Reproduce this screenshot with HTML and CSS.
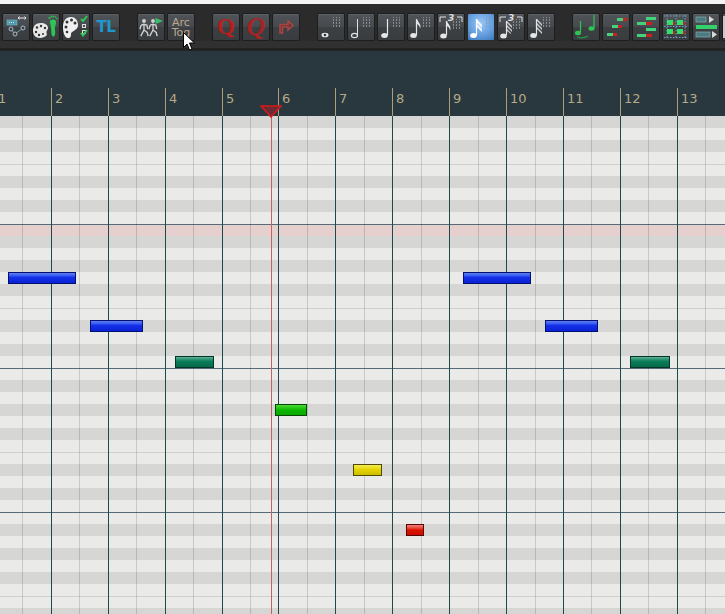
FILE: index.html
```html
<!DOCTYPE html>
<html lang="en">
<head>
<meta charset="utf-8">
<title>Piano roll</title>
<link rel="stylesheet" href="styles.css">
</head>
<body>
<svg class="defs" width="0" height="0" aria-hidden="true">
  <defs>
    <pattern id="dots" x="1" width="3" height="3" patternUnits="userSpaceOnUse"><rect width="1" height="2" fill="#86898d"/></pattern>
    <symbol id="dotgrid" viewBox="0 0 28 28"><rect x="16" y="4" width="9" height="11" fill="url(#dots)"/></symbol>
    <symbol id="walker" viewBox="0 0 12 22">
      <circle cx="6" cy="2.500" r="2.400" fill="#cfcfcf"/>
      <path d="M6 5.500v8M2.500 7.500l3.500-1 3.500 1 1 5M2.500 7.500l-1.500 5M6 13.500l-4 7.500M6 13.500l4 3 1 4.500" fill="none" stroke="#cfcfcf" stroke-width="1.700"/>
    </symbol>
  </defs>
</svg>

<div class="topline"></div>

<header class="toolbar">
  <div class="group">
    <button class="tb"><svg viewBox="0 0 28 28"><rect x="5" y="7" width="10" height="5" fill="#4f98ac" stroke="#6fc0cc" stroke-width=".6"/><path d="M7 9.500h6" stroke="#d8eef2" stroke-dasharray="1 1"/><path d="M16 5h8M16 5l1.500-1.500M16 5l1.500 1.500M24 5l-1.500-1.500M24 5l-1.500 1.500" stroke="#e8e8e8" fill="none"/><path d="M9 16l4 5 8-6" stroke="#7d9ab0" fill="none"/><circle cx="9" cy="16" r="2" fill="#3b3e41" stroke="#a6bccc"/><circle cx="13" cy="21" r="2" fill="#3b3e41" stroke="#a6bccc"/><circle cx="21" cy="15" r="2" fill="#3b3e41" stroke="#a6bccc"/></svg></button>
    <button class="tb"><svg viewBox="0 0 28 28"><path d="M8.500 10C4 10 1 13 1 17.500 1 22 3.500 25 8 25c2.500 0 5-1 6.500-2.500 1-1-.5-2.500 0-4 .5-1.500 1.500-2 1.500-3.500C16 12 13 10 8.500 10z" fill="#e8e8e8"/><g fill="#333"><circle cx="5" cy="14.500" r="1.200"/><circle cx="9" cy="13" r="1.200"/><circle cx="13" cy="15" r="1.200"/><circle cx="4" cy="19" r="1.200"/><circle cx="7" cy="22" r="1.200"/><circle cx="11" cy="21" r="1"/></g><path d="M18 9c-.5-1.500 1-2.500 3-2.500s3.500 1 3 3.500c-.5 3-1.500 4.500-1 7 .5 3 0 6.500-1.500 6.500-2 0-2-2.500-2.200-5.500-.1-3-.8-6-1.300-9z" fill="#2dc653"/><g fill="#2dc653"><circle cx="17.500" cy="5" r="1.100"/><circle cx="19.500" cy="3.500" r=".9"/><circle cx="21.500" cy="3.500" r=".9"/><circle cx="23.500" cy="4" r=".8"/><circle cx="25" cy="5.500" r=".8"/></g></svg></button>
    <button class="tb"><svg viewBox="0 0 28 28"><path d="M9 4C4 4 1 8 1 14c0 6 2 11 5 11 3 0 3-2 3-4 0-2 3-3 4-4 1.500-1 3-2 3-5 0-5-3-8-7-8z" fill="#f0f0f0"/><g fill="#333"><circle cx="5" cy="9" r="1.500"/><circle cx="9.500" cy="7" r="1.500"/><circle cx="13" cy="10" r="1.500"/><circle cx="4" cy="14" r="1.500"/><circle cx="5" cy="19" r="1.300"/></g><path d="M19 6l2 2 4-5" stroke="#2dc653" stroke-width="2" fill="none"/><rect x="20.500" y="11.500" width="3" height="3" fill="none" stroke="#e0e0e0"/><rect x="20.500" y="17.500" width="3" height="3" fill="none" stroke="#e0e0e0"/><path d="M19 20l2 2.500 4-5.500" stroke="#2dc653" stroke-width="2" fill="none"/></svg></button>
    <button class="tb tb-tl">TL</button>
  </div>
  <div class="group">
    <button class="tb"><svg viewBox="0 0 28 28"><use href="#walker" x="2" y="6" width="10" height="18"/><use href="#walker" x="11" y="6" width="10" height="18"/><path d="M18.500 5l7.500 3-7.500 3z" fill="#35c46b"/></svg></button>
    <button class="tb tb-text">Arc<br>Tog</button>
  </div>
  <div class="group">
    <button class="tb tb-q">Q</button>
    <button class="tb tb-q tb-qi">Q</button>
    <button class="tb"><svg viewBox="0 0 28 28"><path d="M8 20v-8.500h8V8l5 4.500-5 4.500v-3h-5.500v6z" fill="#6e3537" stroke="#a84545" stroke-width="1.500"/></svg></button>
  </div>
  <div class="group">
    <button class="tb"><svg viewBox="0 0 28 28"><use href="#dotgrid"/><ellipse cx="8" cy="22" rx="3.500" ry="2.300" fill="#e8e8e8"/><ellipse cx="8" cy="22" rx="1.300" ry="1.200" fill="#333"/></svg></button>
    <button class="tb"><svg viewBox="0 0 28 28"><use href="#dotgrid"/><path d="M10.500 6v16" stroke="#e0e0e0"/><ellipse cx="7.500" cy="22.500" rx="3" ry="2.200" fill="none" stroke="#e0e0e0" stroke-width="1.200"/></svg></button>
    <button class="tb"><svg viewBox="0 0 28 28"><use href="#dotgrid"/><path d="M10.500 6v16" stroke="#e6e6e6" stroke-width="1.200"/><ellipse cx="7.500" cy="22.500" rx="3.300" ry="2.500" fill="#e6e6e6"/></svg></button>
    <button class="tb"><svg viewBox="0 0 28 28"><use href="#dotgrid"/><path d="M9.500 6v16" stroke="#e6e6e6" stroke-width="1.200"/><path d="M10 6c1 4 5 5 3 10 0-3-1.500-4-3-5z" fill="#e6e6e6"/><ellipse cx="6.500" cy="22.500" rx="3.300" ry="2.500" fill="#e6e6e6"/></svg></button>
    <button class="tb"><svg viewBox="0 0 28 28"><path d="M3 9V4h6M20 4h5v5" stroke="#e0e0e0" fill="none"/><text x="11" y="8" class="svg-three">3</text><use href="#dotgrid" y="2"/><path d="M9.500 8v14" stroke="#e6e6e6" stroke-width="1.200"/><path d="M10 8c1 4 5 5 3 10 0-3-1.500-4-3-5z" fill="#e6e6e6"/><ellipse cx="6.500" cy="23" rx="3.300" ry="2.500" fill="#e6e6e6"/></svg></button>
    <button class="tb tb-on"><svg viewBox="0 0 28 28"><rect x="18" y="4" width="7" height="11" fill="url(#dots)" opacity=".6"/><path d="M9.500 6v16" stroke="#fff" stroke-width="1.200"/><path d="M10 6l5 6v3l-5-5zM10 11l5 5v3l-5-5z" fill="#f0f6ff"/><ellipse cx="6.500" cy="22.500" rx="3.300" ry="2.500" fill="#fff"/></svg></button>
    <button class="tb"><svg viewBox="0 0 28 28"><path d="M3 9V4h6M20 4h5v5" stroke="#e0e0e0" fill="none"/><text x="11" y="8" class="svg-three">3</text><use href="#dotgrid" y="2"/><path d="M9.500 8v14" stroke="#e6e6e6" stroke-width="1.200"/><path d="M10 8l5 5v2l-5-5zM10 12l5 5v2l-5-5zM10 16l4 4v1l-4-3z" fill="#d0d0d0"/><ellipse cx="6.500" cy="23" rx="3.300" ry="2.500" fill="#e6e6e6"/></svg></button>
    <button class="tb"><svg viewBox="0 0 28 28"><use href="#dotgrid"/><path d="M9.500 6v16" stroke="#e6e6e6" stroke-width="1.200"/><path d="M10 6l5 5v2l-5-5zM10 10l5 5v2l-5-5zM10 14l5 5v2l-5-5z" fill="#d0d0d0"/><ellipse cx="6.500" cy="22.500" rx="3.300" ry="2.500" fill="#e6e6e6"/></svg></button>
  </div>
  <div class="group">
    <button class="tb"><svg viewBox="0 0 28 28"><path d="M8.500 8v11M22 2v13" stroke="#2dc653" fill="none" stroke-width="1.200"/><ellipse cx="6" cy="20" rx="3" ry="2.200" fill="#2dc653"/><ellipse cx="19.500" cy="15.500" rx="3" ry="2.200" fill="#2dc653"/><path d="M5 24c4 1.500 8 1 11-1" stroke="#1f9a45" fill="none" stroke-width="1.200"/></svg></button>
    <button class="tb"><svg viewBox="0 0 28 28"><rect x="15" y="5" width="6" height="3" fill="#43d37a"/><rect x="21" y="5" width="4" height="3" fill="#c92020"/><rect x="10" y="12" width="6" height="3" fill="#43d37a"/><rect x="16" y="12" width="4" height="3" fill="#c92020"/><rect x="5" y="20" width="6" height="3" fill="#43d37a"/><rect x="11" y="20" width="4" height="3" fill="#c92020"/></svg></button>
    <button class="tb"><svg viewBox="0 0 28 28"><rect x="14" y="4" width="10" height="3" fill="#43d37a"/><rect x="5" y="9" width="9" height="3" fill="#43d37a"/><rect x="14" y="9" width="6" height="3" fill="#c92020"/><rect x="14" y="15" width="10" height="3" fill="#43d37a"/><rect x="5" y="21" width="9" height="3" fill="#43d37a"/><rect x="14" y="21" width="6" height="3" fill="#c92020"/></svg></button>
    <button class="tb"><svg viewBox="0 0 28 28"><path d="M2 3h24M2 13.500h24M2 24.500h24M5 2v24M14 2v24M23 2v24" stroke="#6f9fc0" stroke-dasharray="1.500 1.500" fill="none"/><rect x="5" y="7" width="6" height="5" fill="#2fe06b"/><rect x="11" y="9" width="2" height="3" fill="#c92020"/><rect x="15" y="7" width="6" height="5" fill="#2fe06b"/><rect x="21" y="9" width="2" height="3" fill="#c92020"/><rect x="5" y="16" width="6" height="5" fill="#2fe06b"/><rect x="11" y="18" width="2" height="3" fill="#c92020"/><rect x="15" y="16" width="6" height="5" fill="#2fe06b"/><rect x="21" y="18" width="2" height="3" fill="#c92020"/></svg></button>
    <button class="tb"><svg viewBox="0 0 28 28"><rect x="4" y="4" width="10" height="5" fill="#4d7a80" stroke="#7aa5aa" stroke-width=".8"/><path d="M17 3l5 3.500-5 3.500z" fill="#d8d8d8"/><rect x="4" y="12" width="21" height="4" fill="#34d06b"/><rect x="4" y="19" width="14" height="5" fill="#4d7a80" stroke="#7aa5aa" stroke-width=".8"/><path d="M20 18l5 3.500-5 3.500z" fill="#d8d8d8"/></svg></button>
    <button class="tb"><svg viewBox="0 0 28 28"><rect x="0" y="3" width="3" height="22" fill="#c8c8c8"/></svg></button>
  </div>
</header>

<section class="ruler">
  <div class="bar">1</div><div class="bar">2</div><div class="bar">3</div><div class="bar">4</div><div class="bar">5</div><div class="bar">6</div><div class="bar">7</div><div class="bar">8</div><div class="bar">9</div><div class="bar">10</div><div class="bar">11</div><div class="bar">12</div><div class="bar">13</div>
</section>

<main class="roll">
  <div class="beats">
    <div class="beat"></div><div class="beat"></div><div class="beat"></div><div class="beat"></div><div class="beat"></div><div class="beat"></div><div class="beat"></div><div class="beat"></div><div class="beat"></div><div class="beat"></div><div class="beat"></div><div class="beat"></div><div class="beat"></div><div class="beat"></div><div class="beat"></div><div class="beat"></div><div class="beat"></div><div class="beat"></div><div class="beat"></div><div class="beat"></div><div class="beat"></div><div class="beat"></div><div class="beat"></div><div class="beat"></div><div class="beat"></div><div class="beat"></div>
  </div>
  <div class="note blue n1"></div>
  <div class="note blue n2"></div>
  <div class="note teal n3"></div>
  <div class="note green n4"></div>
  <div class="note yellow n5"></div>
  <div class="note red n6"></div>
  <div class="note blue n7"></div>
  <div class="note blue n8"></div>
  <div class="note teal n9"></div>
  <div class="playline"></div>
</main>

<svg class="playhead" viewBox="0 0 22 13"><path d="M1 1h20L11 12z" fill="#6a2c32" stroke="#d81a1a" stroke-width="1.500"/></svg>
<svg class="cursor" viewBox="0 0 12 19"><path d="M.5.500v15l3.500-3.500 2.500 6 2.500-1-2.500-6h5z" fill="#fff" stroke="#000"/></svg>
</body>
</html>
```

FILE: styles.css
```css
* { box-sizing: border-box; }
html, body {
  margin: 0;
  height: 614px;
  overflow: hidden;
  background: #29373f;
}
body {
  position: relative;
  width: 725px;
  display: flex;
  flex-direction: column;
  font-family: "DejaVu Sans", sans-serif;
}
.defs { position: absolute; }
.topline { height: 4px; flex: none; background: #f4f4f4; }

.toolbar {
  flex: none;
  height: 47px;
  display: flex;
  gap: 17px;
  padding: 9px 0 0 2px;
  background: linear-gradient(#2b2b2b 0, #2b2b2b 37px, #303030 37px, #303030 44px, #222 44px);
  overflow: hidden;
}
.group { display: flex; gap: 2px; flex: none; }
.tb {
  flex: none;
  width: 28px;
  height: 28px;
  margin: 0;
  padding: 0;
  border: 1px solid #1c1d1e;
  border-radius: 2px;
  background: linear-gradient(#505458 0, #46494d 50%, #3d4043 52%, #3a3d40 100%);
  box-shadow: inset 0 1px 0 #5e6266;
  display: flex;
  align-items: center;
  justify-content: center;
  overflow: hidden;
}
.tb svg { width: 28px; height: 28px; flex: none; display: block; }
.tb-on {
  background: radial-gradient(circle at 50% 35%, #9ac6f5 0, #6ba3e2 50%, #3b79bf 100%);
  box-shadow: none;
  border-color: #2a2d30;
}
.tb-tl {
  color: #1e96cf;
  font: bold 15px "DejaVu Sans", sans-serif;
  letter-spacing: -0.5px;
}
.tb-text {
  color: #bda68e;
  font: 11px/10px "DejaVu Sans", sans-serif;
  text-align: center;
  padding-top: 2px;
}
.tb-q {
  color: #bb1c1c;
  font: bold 23px "Liberation Serif", serif;
}
.tb-qi { font-style: italic; font-size: 26px; color: #a82222; }
.svg-three { font: italic bold 9px "DejaVu Sans", sans-serif; fill: #e0e0e0; }

.ruler {
  flex: none;
  height: 65px;
  margin-left: -6px;
  display: grid;
  grid-template-columns: 57px 57px 57px 57px 56px 57px 57px 57px 57px 57px 57px 57px 57px;
  align-items: end;
  background: #29373f;
}
.bar {
  height: 28px;
  border-left: 1px solid #ad9f7c;
  padding: 3px 0 0 3px;
  color: #b5aa86;
  font-size: 13px;
  line-height: 16px;
}

.roll {
  flex: 1;
  position: relative;
  overflow: hidden;
  background:
    linear-gradient(rgba(214, 130, 130, .25), rgba(214, 130, 130, .25)) 0 109px / 100% 11px no-repeat,
    linear-gradient(
      #566a78 0, #566a78 1px,
      #eaeae8 1px, #eaeae8 12px,
      #d6d6d4 12px, #d6d6d4 24px,
      #eaeae8 24px, #eaeae8 36px,
      #d6d6d4 36px, #d6d6d4 48px,
      #eaeae8 48px, #eaeae8 60px,
      #d6d6d4 60px, #d6d6d4 72px,
      #eaeae8 72px, #eaeae8 84px,
      #cfcfcd 84px, #cfcfcd 85px,
      #eaeae8 85px, #eaeae8 96px,
      #d6d6d4 96px, #d6d6d4 108px,
      #eaeae8 108px, #eaeae8 120px,
      #d6d6d4 120px, #d6d6d4 132px,
      #eaeae8 132px, #eaeae8 144px
    ) 0 108px / 100% 144px;
}
.beats {
  height: 100%;
  margin-left: -6px;
  display: grid;
  grid-template-columns:
    28px 29px 28px 29px 28px 29px 28px 29px 28px 28px 29px 28px 29px
    28px 29px 28px 29px 28px 29px 28px 28px 29px 28px 29px 28px 29px;
}
.beat { border-left: 1px solid #1f4a4c; }
.beat:nth-child(even) { border-left-color: rgba(0, 0, 0, .14); }

.note {
  position: absolute;
  height: 12px;
  border: 1px solid;
}
.blue { border-color: #00106e; background: linear-gradient(#5f7ff5 0, #3a5cf0 25%, #1430e6 45%, #0a22d8 100%); }
.teal { border-color: #04342a; background: linear-gradient(#5fb596 0, #2a9270 25%, #0a7d58 45%, #046a4a 100%); }
.green { border-color: #044a04; background: linear-gradient(#4fd83a 0, #24c814 30%, #0cb600 50%, #0aa800 100%); }
.yellow { border-color: #4f4a04; background: linear-gradient(#f5ea5a 0, #ecdf1a 30%, #e2d200 50%, #cdbd00 100%); }
.red { border-color: #5a0404; background: linear-gradient(#f08080 0, #e84a3a 30%, #dc1400 50%, #c81000 100%); }
.n1 { left: 8px; top: 156px; width: 68px; }
.n2 { left: 90px; top: 204px; width: 53px; }
.n3 { left: 175px; top: 240px; width: 39px; }
.n4 { left: 275px; top: 288px; width: 32px; }
.n5 { left: 353px; top: 348px; width: 29px; }
.n6 { left: 406px; top: 408px; width: 18px; }
.n7 { left: 463px; top: 156px; width: 68px; }
.n8 { left: 545px; top: 204px; width: 53px; }
.n9 { left: 630px; top: 240px; width: 40px; }

.playline {
  position: absolute;
  left: 271px;
  top: 0;
  bottom: 0;
  width: 1px;
  background: #c46060;
}
.playhead {
  position: absolute;
  left: 260px;
  top: 105px;
  width: 22px;
  height: 13px;
}
.cursor {
  position: absolute;
  left: 183px;
  top: 32px;
  width: 12px;
  height: 19px;
}
```
